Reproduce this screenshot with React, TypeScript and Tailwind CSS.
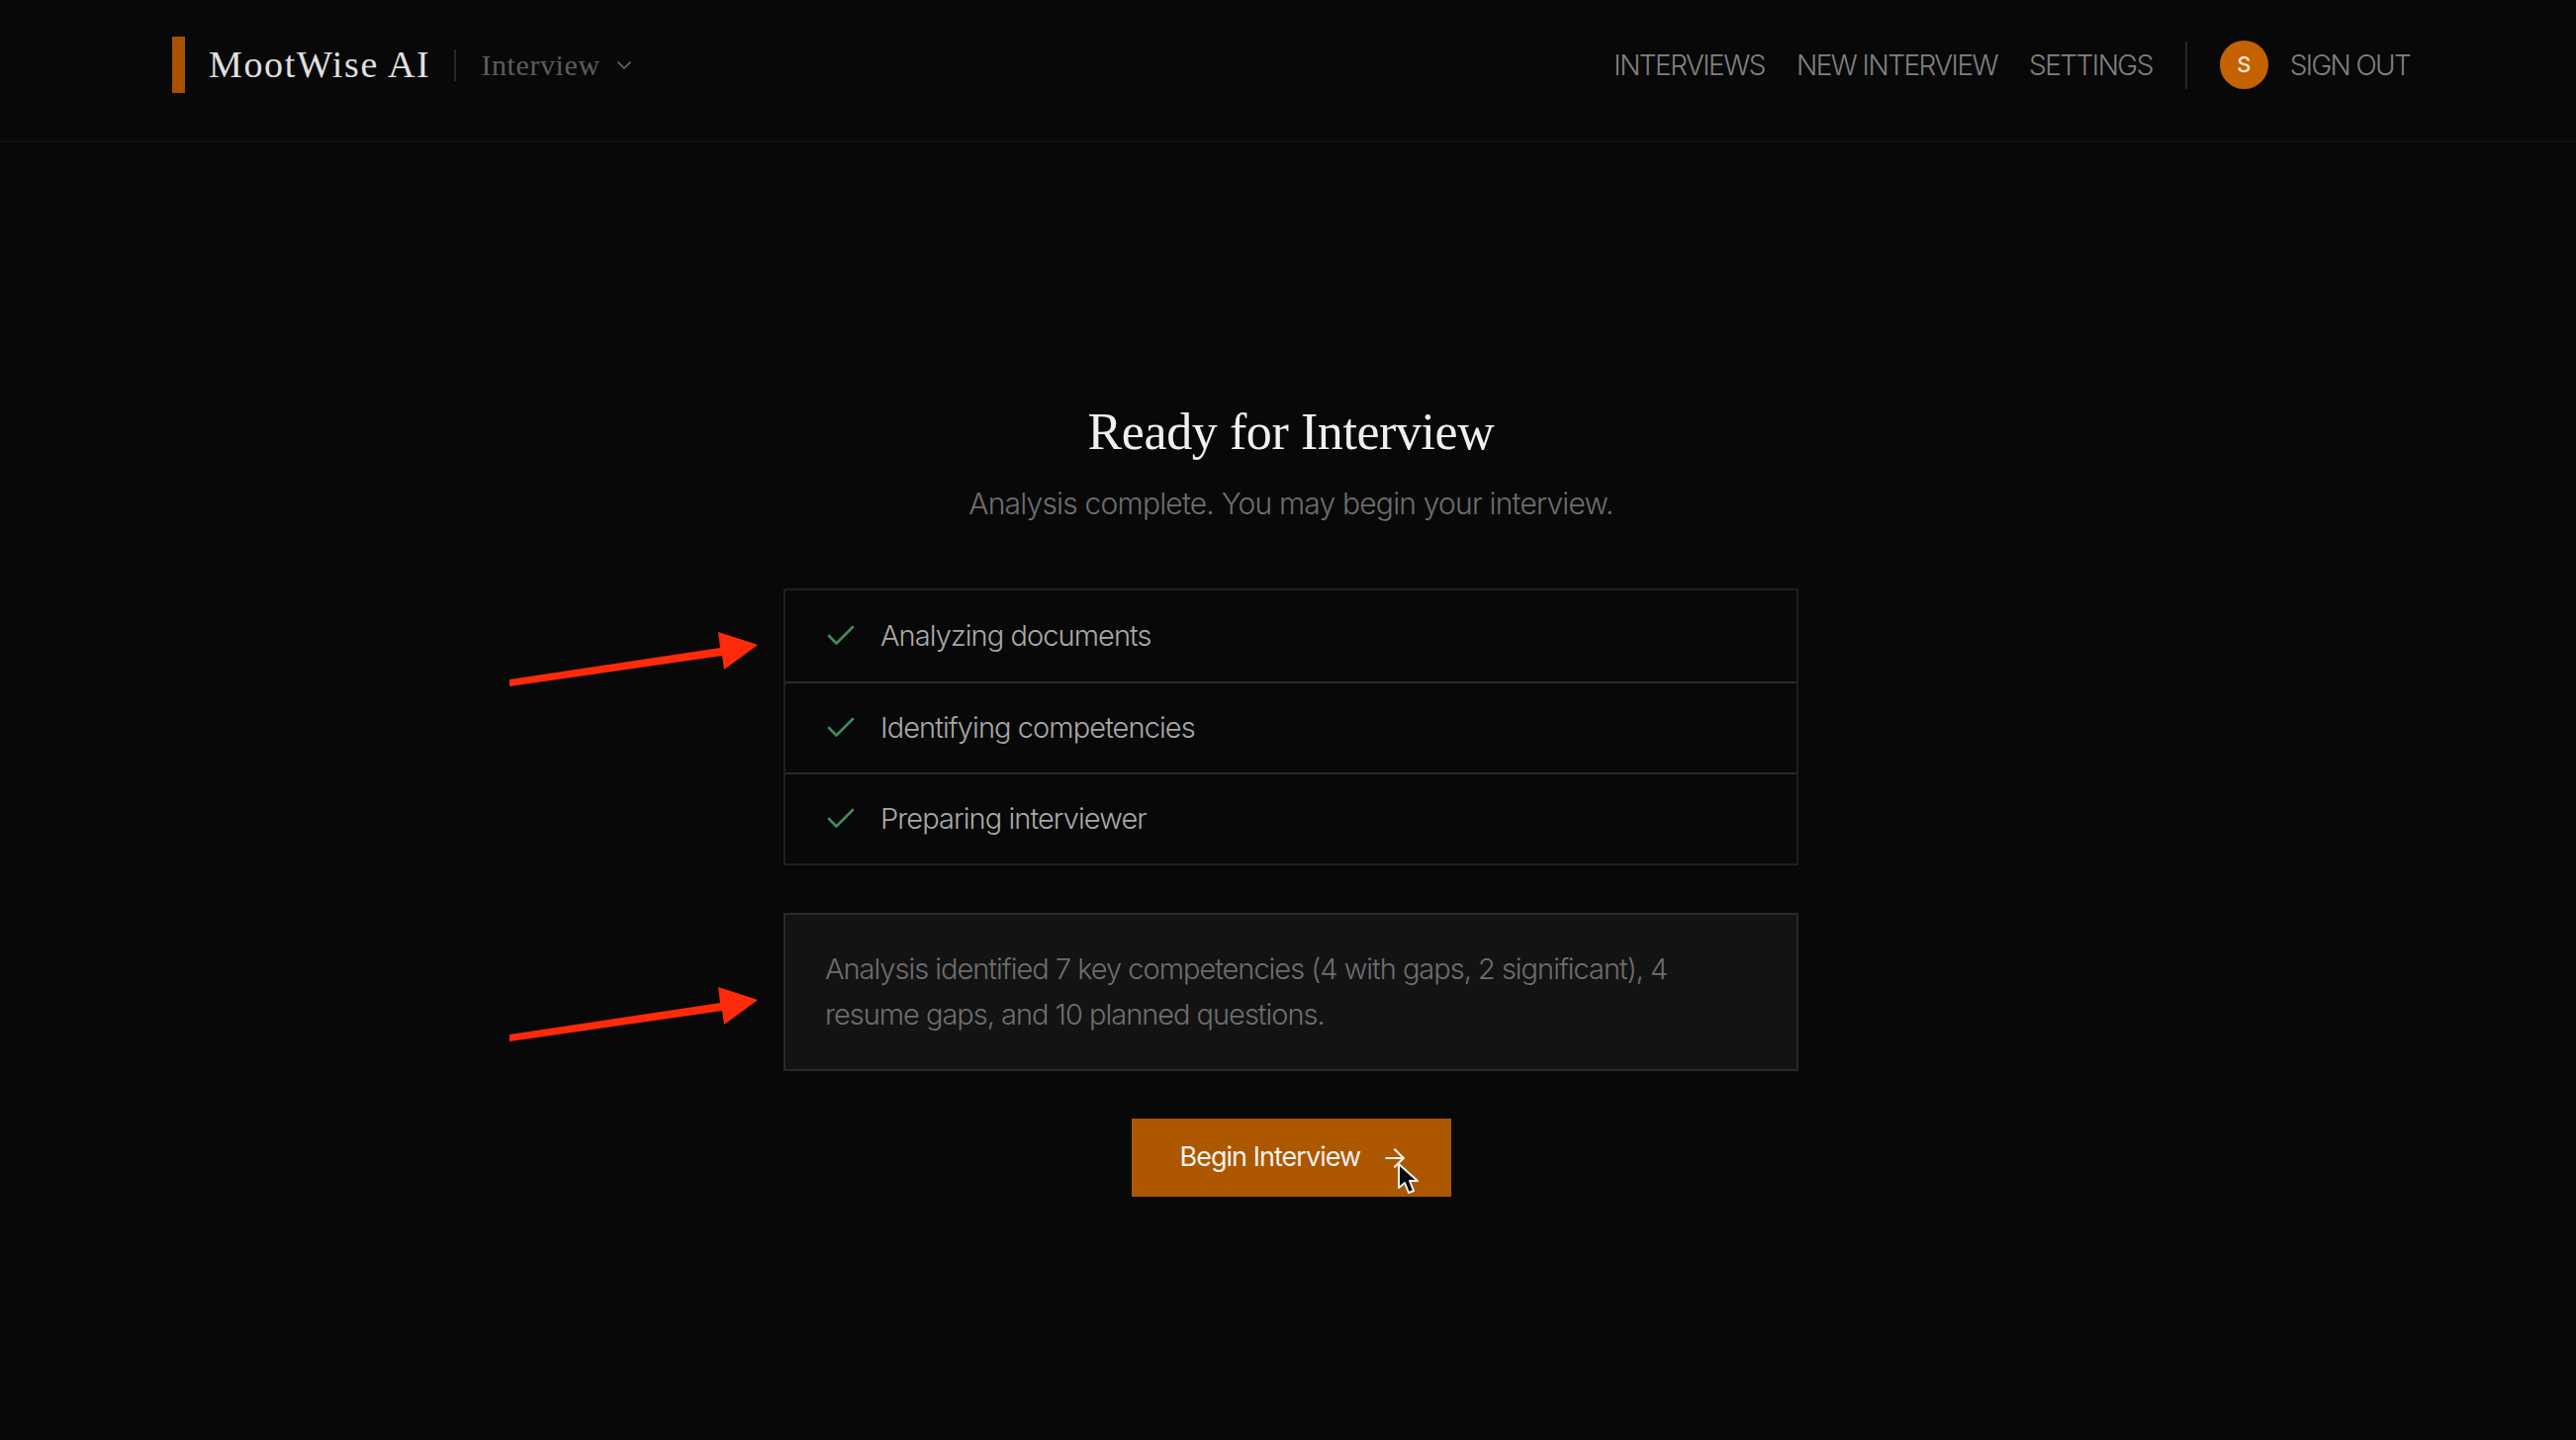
import { Check, ChevronDown, ArrowRight } from "lucide-react"

const serif = "font-['Liberation_Serif',serif]"
const sans = "font-['Inter',sans-serif]"

const steps = ["Analyzing documents", "Identifying competencies", "Preparing interviewer"]

function NavLink({ label, className = "tracking-[-0.055em]" }: { label: string; className?: string }) {
  return <a className={`text-[28px] font-light text-[#808080] ${className}`}>{label}</a>
}

function Header() {
  return (
    <header className="flex h-[144px] items-center justify-between border-b-2 border-[#111111] pb-[11px] pl-[174px] pr-[168px]">
      <div className="flex items-center">
        <div className="h-[57px] w-[13px] bg-[#a85100]" />
        <span className={`${serif} ml-[24px] text-[38px] tracking-[0.043em] text-[#e0e0e0]`}>MootWise AI</span>
        <div className="ml-[24px] h-[32px] w-[2px] bg-[#262626]" />
        <span className={`${serif} ml-[25px] text-[30px] tracking-[0.02em] text-[#5c5c5c]`}>Interview</span>
        <ChevronDown className="ml-[12px] h-[24px] w-[24px] text-[#6a6a6a]" strokeWidth={1.75} />
      </div>
      <nav className="flex items-center gap-[32px]">
        <NavLink label="INTERVIEWS" />
        <NavLink label="NEW INTERVIEW" />
        <NavLink label="SETTINGS" />
        <div className="mx-[1px] h-[48px] w-[2px] bg-[#262626]" />
        <div className="flex items-center gap-[22px]">
          <div className={`${sans} flex h-[49px] w-[49px] items-center justify-center rounded-full bg-[#c46200] text-[22px] font-medium text-[#f5e6d8]`}>
            S
          </div>
          <NavLink label="SIGN OUT" className="tracking-[-0.06em]" />
        </div>
      </nav>
    </header>
  )
}

function AnnotationArrow({ className }: { className: string }) {
  return (
    <svg className={`absolute left-[510px] h-[64px] w-[260px] ${className}`} viewBox="0 0 260 64">
      <polygon points="5,52 218,20 216,4 256,17 222,42 220,28 5,59" fill="#ff2a0a" />
    </svg>
  )
}

export default function App() {
  return (
    <div className={`${sans} relative h-[1456px] w-[2604px] overflow-hidden bg-[#080808]`}>
      <Header />
      <main className="flex flex-col items-center pl-[6px] pt-[261px]">
        <h1 className={`${serif} text-[52px] leading-[64px] tracking-[-0.008em] text-[#f0f0f0]`}>Ready for Interview</h1>
        <p className="mt-[20px] text-[30px] font-light leading-[40px] tracking-[-0.027em] text-[#6e6e6e]">
          Analysis complete. You may begin your interview.
        </p>

        <div className="mt-[66px] w-[1026px] border-2 border-[#17231b]">
          {steps.map((step, i) => (
            <div
              key={step}
              className={`flex h-[92px] items-center pl-[38px] ${i > 0 ? "border-t-2 border-[#2a2a2a]" : ""}`}
            >
              <Check className="h-[36px] w-[36px] text-[#3e8e5a]" strokeWidth={1.75} />
              <span className="ml-[22px] text-[29px] font-light tracking-[-0.032em] text-[#a8a8a8]">{step}</span>
            </div>
          ))}
        </div>

        <div className="mt-[48px] h-[160px] w-[1026px] border-2 border-[#2a2a2a] bg-[#131313] px-[40px] pt-[32px]">
          <p className="text-[29px] font-light leading-[46px] tracking-[-0.035em] text-[#6e6e6e]">
            Analysis identified 7 key competencies (4 with gaps, 2 significant), 4 resume gaps, and 10 planned questions.
          </p>
        </div>

        <button className="relative mt-[48px] flex h-[79px] w-[323px] items-center bg-[#ad5700] pl-[49px] text-[27px] font-normal tracking-[-0.036em] text-[#f5f0ea]">
          Begin Interview
          <ArrowRight className="ml-[20px] h-[30px] w-[30px]" strokeWidth={1.75} />
          <svg className="absolute left-[268px] top-[44px] h-[34px] w-[24px]" viewBox="0 0 24 34">
            <path d="M2 2 L2 26 L8 21 L12 31 L17 29 L13 19 L21 19 Z" fill="#0a0a0a" stroke="#f2f2f2" strokeWidth="2" strokeLinejoin="round" />
          </svg>
        </button>
      </main>

      <AnnotationArrow className="top-[635px]" />
      <AnnotationArrow className="top-[994px]" />
    </div>
  )
}
